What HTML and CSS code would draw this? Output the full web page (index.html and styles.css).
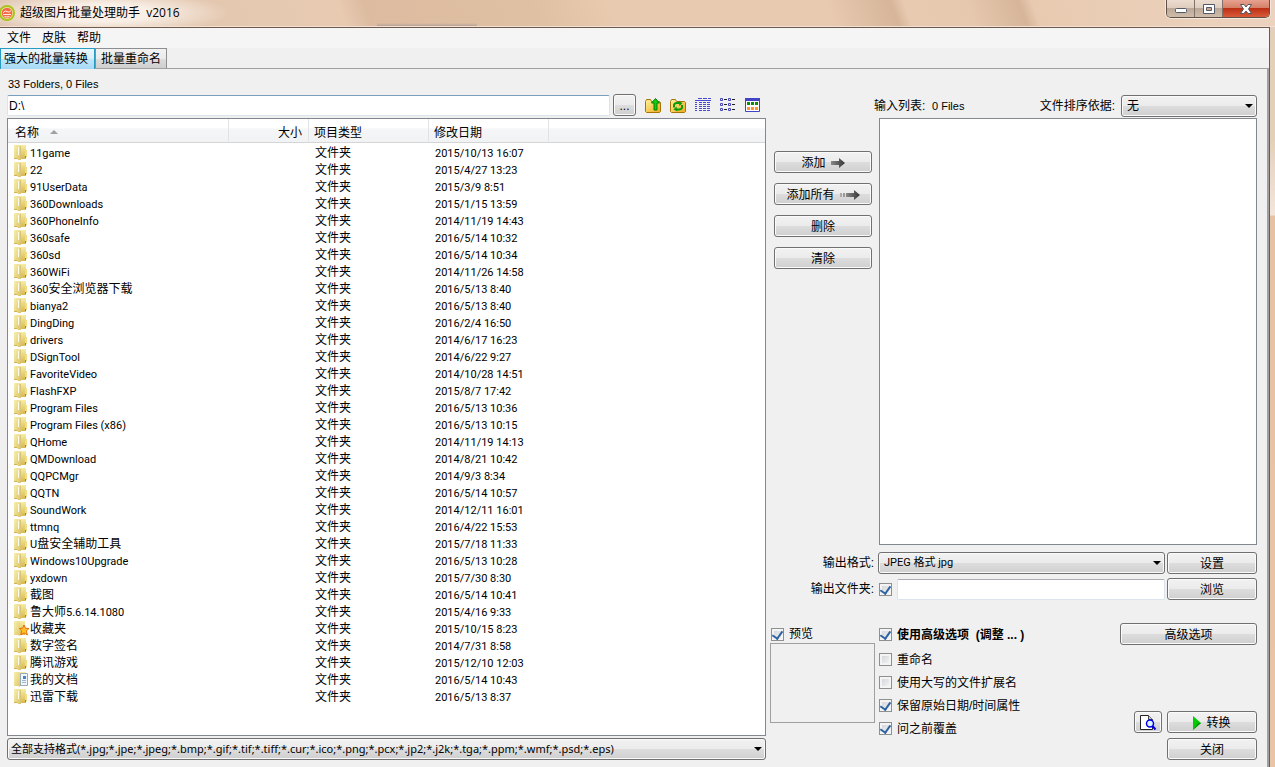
FILE: index.html
```html
<!DOCTYPE html>
<html lang="zh-CN">
<head>
    <meta charset="UTF-8">
    <meta name="viewport" content="width=device-width, initial-scale=1.0">
    <title>超级图片批量处理助手 v2016</title>
    <link rel="stylesheet" href="styles.css">
</head>
<body>
    <!-- Shared icons -->
    <svg class="sprites" width="0" height="0" aria-hidden="true">
        <defs>
            <linearGradient id="foldFront" x1="0" x2="1" y1="0" y2="1">
                <stop offset="0" stop-color="#f7efb0"/>
                <stop offset="1" stop-color="#e0c766"/>
            </linearGradient>
            <linearGradient id="foldBack" x1="0" x2="0" y1="0" y2="1">
                <stop offset="0" stop-color="#f6eda4"/>
                <stop offset="1" stop-color="#d9b94c"/>
            </linearGradient>
            <linearGradient id="gold" x1="0" x2="1" y1="0" y2="1">
                <stop offset="0" stop-color="#fff3a0"/>
                <stop offset="1" stop-color="#f0a818"/>
            </linearGradient>
            <linearGradient id="arrowGray" x1="0" x2="1" y1="0" y2="0">
                <stop offset="0" stop-color="#8a8a8a"/>
                <stop offset="1" stop-color="#333"/>
            </linearGradient>
        </defs>
        <symbol id="folder" viewBox="0 0 15 16">
            <path d="M5 0h7v14H5z" fill="url(#foldBack)"/>
            <path d="M0 0h4l2 1v14l-2 0-1-1H0z" fill="url(#foldFront)"/>
            <path d="M6 1h1v14H6z" fill="#d8c57a"/>
            <path d="M4 2h1v8H4z" fill="#fffde8"/>
            <path d="M0 13h3v1H0z" fill="#cfb356"/>
            <path d="M11 5h2v7l-2 1z" fill="#f0dd84"/>
            <path d="M11 11h1v2h-1z" fill="#3aa0a0"/>
        </symbol>
        <symbol id="folder-star" viewBox="0 0 15 16">
            <path d="M5 0h6v14H5z" fill="url(#foldBack)"/>
            <path d="M0 0h5l1 1v14l-2-1H0z" fill="url(#foldFront)"/>
            <path d="M10 4l1.400 3.200 3.600.3-2.700 2.300 1.100 4.200L10 11.800 6.800 14l.9-4.200L5.300 7.500l3.400-.3z" fill="#ffc31f" stroke="#ec6a18"/>
        </symbol>
        <symbol id="folder-doc" viewBox="0 0 15 16">
            <path d="M5 0h7v14H5z" fill="url(#foldBack)"/>
            <path d="M0 0h5l1 1v14l-2-1H0z" fill="url(#foldFront)"/>
            <path d="M6.500 1.500h7v12h-7z" fill="#eef5fb" stroke="#9aa7b4"/>
            <path d="M8 8.500h4M8 10.500h4" stroke="#9fb5cc"/>
            <path d="M9 4h3v3H9z" fill="#3f86cf"/>
        </symbol>
    </svg>

    <header class="titlebar">
        <svg class="logo" width="16" height="16" viewBox="0 0 16 16">
            <circle cx="7" cy="8" r="8" fill="#a9c41e"/>
            <circle cx="7" cy="8" r="6" fill="#f5e7a0"/>
            <circle cx="7" cy="8" r="5.300" fill="#f26a4b"/>
            <path d="M3 8q2-3.500 4-1.500T11 5.500M3 9.500h8M4.500 11.500q2.500 1 5 0" fill="none" stroke="#fff0dc"/>
        </svg>
        <h1>超级图片批量处理助手&nbsp; v2016</h1>
        <div class="window-controls">
            <button type="button" class="minimize" aria-label="最小化">
                <svg width="14" height="12" viewBox="0 0 14 12"><rect x="1.500" y="5.500" width="11" height="4" rx="1" fill="#fff" stroke="#535966"/></svg>
            </button>
            <button type="button" class="maximize" aria-label="最大化">
                <svg width="14" height="12" viewBox="0 0 14 12"><path d="M1.500 1.500h11v9h-11z" fill="#fff" stroke="#535966"/><path d="M4.500 4.500h5v3h-5z" fill="#c9ab94" stroke="#535966"/></svg>
            </button>
            <button type="button" class="close" aria-label="关闭窗口">
                <svg width="14" height="12" viewBox="0 0 14 12"><path d="M1.500 1.500h3.500l2 2.500 2-2.500h3.500L9.500 6l3 4.500H9L7 8l-2 2.500H1.500l3-4.500z" fill="#fff" stroke="#535966"/></svg>
            </button>
        </div>
    </header>

    <div class="client">
        <nav class="menubar">
            <button type="button">文件</button>
            <button type="button">皮肤</button>
            <button type="button">帮助</button>
        </nav>
        <div class="tabs" role="tablist">
            <button type="button" role="tab" class="active" aria-selected="true">强大的批量转换</button>
            <button type="button" role="tab" aria-selected="false">批量重命名</button>
        </div>

        <main>
            <!-- File browser -->
            <section class="browser">
                <p class="count arial">33 Folders, 0 Files</p>
                <div class="path-row">
                    <input type="text" class="path" value="D:\" aria-label="路径">
                    <button type="button" class="btn dots">...</button>
                    <div class="tools">
                        <button type="button" aria-label="向上">
                            <svg width="18" height="17" viewBox="0 0 18 17">
                                <path d="M1.500 4.500l1-2h4l1 2h8l1 1v9l-1 1h-13l-1-1z" fill="url(#gold)" stroke="#a87408"/>
                                <path d="M11.500 1.500l4 4.500H13v7h-3V6H7.500z" fill="#12cc12" stroke="#078007"/>
                            </svg>
                        </button>
                        <button type="button" aria-label="刷新">
                            <svg width="18" height="17" viewBox="0 0 18 17">
                                <path d="M1.500 4.500l1-2h4l1 2h8l1 1v9l-1 1h-13l-1-1z" fill="url(#gold)" stroke="#a87408"/>
                                <path d="M5 10.500V8q.5-2 3-2h2" fill="none" stroke="#0a9a0a" stroke-width="2"/>
                                <path d="M9.500 4l4 2-3 3z" fill="#0a9a0a"/>
                                <path d="M13 8v2.500q-.5 2-3 2H8" fill="none" stroke="#0a9a0a" stroke-width="2"/>
                                <path d="M8.500 14.500l-4-2 3-3z" fill="#0a9a0a"/>
                            </svg>
                        </button>
                        <button type="button" aria-label="详细信息">
                            <svg width="18" height="17" viewBox="0 0 18 17">
                                <path d="M4 1.500h13" stroke="#4a4ad0" stroke-dasharray="4 1"/>
                                <path d="M1 3.500h16" stroke="#4a4ad0"/>
                                <path d="M5 5.500h12M5 7.500h12M5 9.500h12M5 11.500h12M5 13.500h12" stroke="#4a4ad0" stroke-dasharray="3 1"/>
                                <path d="M1 5.500h2M1 7.500h2M1 9.500h2M1 11.500h2M1 13.500h2" stroke="#4a4ad0"/>
                            </svg>
                        </button>
                        <button type="button" aria-label="列表">
                            <svg width="18" height="17" viewBox="0 0 18 17">
                                <path d="M1.500 1.500h2v2h-2zM9.500 1.500h2v2h-2zM1.500 6.500h2v2h-2zM9.500 6.500h2v2h-2zM1.500 11.500h2v2h-2zM9.500 11.500h2v2h-2z" fill="none" stroke="#4343c5"/>
                                <path d="M5 2.500h3M13 2.500h3M5 7.500h3M13 7.500h3M5 12.500h3M13 12.500h3" stroke="#222"/>
                            </svg>
                        </button>
                        <button type="button" aria-label="缩略图">
                            <svg width="18" height="17" viewBox="0 0 18 17">
                                <path d="M1.500 1.500h14v13h-14z" fill="#fff" stroke="#4343c5"/>
                                <path d="M1 1h15v3H1z" fill="#4343c5"/>
                                <path d="M3 5h3v3H3zM7 5h3v3H7zM11 5h3v3h-3z" fill="#089008"/>
                                <path d="M3 10h3v3H3zM7 10h3v3H7zM11 10h3v3h-3z" fill="#ff9430"/>
                            </svg>
                        </button>
                    </div>
                </div>

                <div class="file-list">
                    <table>
                        <colgroup>
                            <col class="col-name">
                            <col class="col-size">
                            <col class="col-type">
                            <col class="col-date">
                            <col>
                        </colgroup>
                        <thead>
                            <tr><th>名称 <span class="sort-mark"></span></th><th class="size">大小</th><th>项目类型</th><th>修改日期</th><th></th></tr>
                        </thead>
                        <tbody>
                            <tr><td><svg><use href="#folder"/></svg><span>11game</span></td><td></td><td>文件夹</td><td><span>2015/10/13 16:07</span></td><td></td></tr>
                            <tr><td><svg><use href="#folder"/></svg><span>22</span></td><td></td><td>文件夹</td><td><span>2015/4/27 13:23</span></td><td></td></tr>
                            <tr><td><svg><use href="#folder"/></svg><span>91UserData</span></td><td></td><td>文件夹</td><td><span>2015/3/9 8:51</span></td><td></td></tr>
                            <tr><td><svg><use href="#folder"/></svg><span>360Downloads</span></td><td></td><td>文件夹</td><td><span>2015/1/15 13:59</span></td><td></td></tr>
                            <tr><td><svg><use href="#folder"/></svg><span>360PhoneInfo</span></td><td></td><td>文件夹</td><td><span>2014/11/19 14:43</span></td><td></td></tr>
                            <tr><td><svg><use href="#folder"/></svg><span>360safe</span></td><td></td><td>文件夹</td><td><span>2016/5/14 10:32</span></td><td></td></tr>
                            <tr><td><svg><use href="#folder"/></svg><span>360sd</span></td><td></td><td>文件夹</td><td><span>2016/5/14 10:34</span></td><td></td></tr>
                            <tr><td><svg><use href="#folder"/></svg><span>360WiFi</span></td><td></td><td>文件夹</td><td><span>2014/11/26 14:58</span></td><td></td></tr>
                            <tr><td><svg><use href="#folder"/></svg><span>360</span>安全浏览器下载</td><td></td><td>文件夹</td><td><span>2016/5/13 8:40</span></td><td></td></tr>
                            <tr><td><svg><use href="#folder"/></svg><span>bianya2</span></td><td></td><td>文件夹</td><td><span>2016/5/13 8:40</span></td><td></td></tr>
                            <tr><td><svg><use href="#folder"/></svg><span>DingDing</span></td><td></td><td>文件夹</td><td><span>2016/2/4 16:50</span></td><td></td></tr>
                            <tr><td><svg><use href="#folder"/></svg><span>drivers</span></td><td></td><td>文件夹</td><td><span>2014/6/17 16:23</span></td><td></td></tr>
                            <tr><td><svg><use href="#folder"/></svg><span>DSignTool</span></td><td></td><td>文件夹</td><td><span>2014/6/22 9:27</span></td><td></td></tr>
                            <tr><td><svg><use href="#folder"/></svg><span>FavoriteVideo</span></td><td></td><td>文件夹</td><td><span>2014/10/28 14:51</span></td><td></td></tr>
                            <tr><td><svg><use href="#folder"/></svg><span>FlashFXP</span></td><td></td><td>文件夹</td><td><span>2015/8/7 17:42</span></td><td></td></tr>
                            <tr><td><svg><use href="#folder"/></svg><span>Program Files</span></td><td></td><td>文件夹</td><td><span>2016/5/13 10:36</span></td><td></td></tr>
                            <tr><td><svg><use href="#folder"/></svg><span>Program Files (x86)</span></td><td></td><td>文件夹</td><td><span>2016/5/13 10:15</span></td><td></td></tr>
                            <tr><td><svg><use href="#folder"/></svg><span>QHome</span></td><td></td><td>文件夹</td><td><span>2014/11/19 14:13</span></td><td></td></tr>
                            <tr><td><svg><use href="#folder"/></svg><span>QMDownload</span></td><td></td><td>文件夹</td><td><span>2014/8/21 10:42</span></td><td></td></tr>
                            <tr><td><svg><use href="#folder"/></svg><span>QQPCMgr</span></td><td></td><td>文件夹</td><td><span>2014/9/3 8:34</span></td><td></td></tr>
                            <tr><td><svg><use href="#folder"/></svg><span>QQTN</span></td><td></td><td>文件夹</td><td><span>2016/5/14 10:57</span></td><td></td></tr>
                            <tr><td><svg><use href="#folder"/></svg><span>SoundWork</span></td><td></td><td>文件夹</td><td><span>2014/12/11 16:01</span></td><td></td></tr>
                            <tr><td><svg><use href="#folder"/></svg><span>ttmnq</span></td><td></td><td>文件夹</td><td><span>2016/4/22 15:53</span></td><td></td></tr>
                            <tr><td><svg><use href="#folder"/></svg><span>U</span>盘安全辅助工具</td><td></td><td>文件夹</td><td><span>2015/7/18 11:33</span></td><td></td></tr>
                            <tr><td><svg><use href="#folder"/></svg><span>Windows10Upgrade</span></td><td></td><td>文件夹</td><td><span>2016/5/13 10:28</span></td><td></td></tr>
                            <tr><td><svg><use href="#folder"/></svg><span>yxdown</span></td><td></td><td>文件夹</td><td><span>2015/7/30 8:30</span></td><td></td></tr>
                            <tr><td><svg><use href="#folder"/></svg>截图</td><td></td><td>文件夹</td><td><span>2016/5/14 10:41</span></td><td></td></tr>
                            <tr><td><svg><use href="#folder"/></svg>鲁大师<span>5.6.14.1080</span></td><td></td><td>文件夹</td><td><span>2015/4/16 9:33</span></td><td></td></tr>
                            <tr><td><svg><use href="#folder-star"/></svg>收藏夹</td><td></td><td>文件夹</td><td><span>2015/10/15 8:23</span></td><td></td></tr>
                            <tr><td><svg><use href="#folder"/></svg>数字签名</td><td></td><td>文件夹</td><td><span>2014/7/31 8:58</span></td><td></td></tr>
                            <tr><td><svg><use href="#folder"/></svg>腾讯游戏</td><td></td><td>文件夹</td><td><span>2015/12/10 12:03</span></td><td></td></tr>
                            <tr><td><svg><use href="#folder-doc"/></svg>我的文档</td><td></td><td>文件夹</td><td><span>2016/5/14 10:43</span></td><td></td></tr>
                            <tr><td><svg><use href="#folder"/></svg>迅雷下载</td><td></td><td>文件夹</td><td><span>2016/5/13 8:37</span></td><td></td></tr>
                        </tbody>
                    </table>
                </div>

                <div class="select filter">
                    <select aria-label="文件类型">
                        <option>全部支持格式(*.jpg;*.jpe;*.jpeg;*.bmp;*.gif;*.tif;*.tiff;*.cur;*.ico;*.png;*.pcx;*.jp2;*.j2k;*.tga;*.ppm;*.wmf;*.psd;*.eps)</option>
                    </select>
                </div>
            </section>

            <!-- Conversion queue and options -->
            <section class="convert">
                <div class="queue-head">
                    <span>输入列表:&nbsp; <span class="arial">0 Files</span></span>
                    <label for="sort">文件排序依据:</label>
                    <div class="select sort">
                        <select id="sort"><option>无</option></select>
                    </div>
                </div>

                <div class="queue">
                    <div class="queue-buttons">
                        <button type="button" class="btn">添加
                            <svg width="14" height="12" viewBox="0 0 14 12"><path d="M0 4h8V1l6 5-6 5V8H0z" fill="url(#arrowGray)"/></svg>
                        </button>
                        <button type="button" class="btn">添加所有
                            <svg width="20" height="12" viewBox="0 0 20 12"><path d="M0 4h2v4H0z" fill="#aaa"/><path d="M3 4h2v4H3z" fill="#999"/><path d="M6 4h8V1l6 5-6 5V8H6z" fill="url(#arrowGray)"/></svg>
                        </button>
                        <button type="button" class="btn">删除</button>
                        <button type="button" class="btn">清除</button>
                    </div>
                    <div class="queue-list"></div>
                </div>

                <div class="output">
                    <label for="format">输出格式:</label>
                    <div class="select format">
                        <select id="format"><option>JPEG 格式 jpg</option></select>
                    </div>
                    <button type="button" class="btn">设置</button>

                    <label for="folder-path">输出文件夹:</label>
                    <div class="folder-field">
                        <input type="checkbox" aria-label="使用输出文件夹" checked>
                        <input type="text" id="folder-path">
                    </div>
                    <button type="button" class="btn">浏览</button>
                </div>

                <div class="bottom">
                    <div class="preview">
                        <label class="check"><input type="checkbox" checked>预览</label>
                        <div class="preview-box"></div>
                    </div>
                    <div class="options">
                        <label class="check main-option"><input type="checkbox" checked>使用高级选项&nbsp; (调整 ... )</label>
                        <label class="check"><input type="checkbox">重命名</label>
                        <label class="check"><input type="checkbox">使用大写的文件扩展名</label>
                        <label class="check"><input type="checkbox" checked>保留原始日期/时间属性</label>
                        <label class="check"><input type="checkbox" checked>问之前覆盖</label>
                    </div>
                    <div class="actions">
                        <button type="button" class="btn advanced">高级选项</button>
                        <div class="run-row">
                            <button type="button" class="btn view" aria-label="预览文件">
                                <svg width="18" height="17" viewBox="0 0 18 17">
                                    <path d="M1.500 1.500h8l4 4v10h-12z" fill="#fff" stroke="#222"/>
                                    <path d="M9.500 1.500v4h4" fill="#ccc" stroke="#444"/>
                                    <circle cx="11" cy="9.500" r="3.500" fill="#dff6ff" stroke="#0000f0" stroke-width="1.500"/>
                                    <path d="M13.500 12l3 3.500" stroke="#0000f0" stroke-width="2"/>
                                </svg>
                            </button>
                            <button type="button" class="btn">
                                <svg width="8" height="14" viewBox="0 0 8 14"><path d="M0 0l8 7-8 7z" fill="#0c0"/><path d="M0 14l8-7H5z" fill="#089008"/></svg>
                                转换
                            </button>
                        </div>
                        <button type="button" class="btn">关闭</button>
                    </div>
                </div>
            </section>
        </main>
    </div>
</body>
</html>
```
FILE: styles.css
```css
* {
    box-sizing: border-box;
}
body {
    margin: 0;
    min-height: 100vh;
    display: flex;
    flex-direction: column;
    background: linear-gradient(#e6cfba 0, #e6cfba 140px, #f3e6da 215px, #e6c2a4 216px, #e8c5a6 100%);
    color: #000;
    font-family: "Liberation Sans", "Noto Sans CJK SC", sans-serif;
    font-size: 12px;
    line-height: 16px;
}
button, input, select {
    font: inherit;
    color: inherit;
    margin: 0;
}
.sprites {
    position: absolute;
}
.arial {
    font-size: 11px;
}

/* Title bar */
.titlebar {
    display: flex;
    align-items: flex-start;
    height: 27px;
    padding-right: 5px;
    border-bottom: 1px solid #f3e2d3;
    background:
        radial-gradient(ellipse 130px 22px at 100px 13px, rgba(255, 250, 245, 0.8) 40%, transparent),
        linear-gradient(rgba(130, 130, 150, 0) 0, #a99a98 100%) 377px 23px / 100px 4px no-repeat,
        linear-gradient(70deg, #ddc2ac 0, #e6c9b1 22%, #e8cab1 27%, #dcbba0 29%, #e0c0a2 42%, #e8cab0 48%, #e8cab0 65%, #d6b59a 70%, #e8cab0 71%, #e6c8ae 76%, #d6b59a 80%, #e8cab0 81%, #ecd3bf 100%);
}
.logo {
    margin-top: 5px;
}
h1 {
    flex: 1;
    margin: 5px 0 0 4px;
    font-family: "Open Sans", "Noto Sans CJK SC", sans-serif;
    font-size: 12px;
    font-weight: normal;
}
.window-controls {
    display: flex;
    height: 18px;
    border: 1px solid #5f5048;
    border-top: none;
    border-radius: 0 0 5px 5px;
    box-shadow: 0 0 0 1px #f5e8dd;
    overflow: hidden;
}
.window-controls button {
    display: flex;
    justify-content: center;
    align-items: center;
    width: 28px;
    padding: 0;
    border: none;
    border-right: 1px solid #82706a;
    background: linear-gradient(#ecdccf 0, #dfcdbf 45%, #bba898 50%, #d0bcaa 100%);
}
.window-controls .close {
    width: 46px;
    border-right: none;
    background: linear-gradient(#e7a291 0, #d68069 45%, #bc3015 50%, #d95b38 100%);
}

/* Client area */
.client {
    flex: 1;
    display: flex;
    flex-direction: column;
    margin-right: 5px;
    border-top: 1px solid #6e5a4c;
    border-right: 1px solid #6e5a4c;
    background: #f0f0f0;
}
.menubar {
    display: flex;
    gap: 11px;
    height: 20px;
    padding: 2px 7px;
    background: #f5f5f5;
}
.menubar button {
    padding: 0;
    border: none;
    background: none;
}
.tabs {
    display: flex;
    height: 21px;
    border-bottom: 1px solid #a0a0a0;
}
.tabs button {
    height: 20px;
    padding: 0 5px;
    border: 1px solid #8d8e8f;
    border-bottom: none;
    background: linear-gradient(#f2f2f2 0, #ebebeb 50%, #dcdcdc 51%, #cfcfcf 100%);
}
.tabs .active {
    height: 21px;
    padding: 0 6px 0 3px;
    border-color: #2a9bc0;
    background: linear-gradient(#eaf6fd 0, #d9f0fc 50%, #bee6fd 51%, #a7d9f5 100%);
}
main {
    flex: 1;
    display: flex;
    gap: 4px;
    padding: 0 10px 7px 7px;
    border-right: 2px solid #a0a0a0;
}
.browser {
    flex: 759;
    min-width: 0;
    display: flex;
    flex-direction: column;
}
.convert {
    flex: 487;
    min-width: 0;
    display: flex;
    flex-direction: column;
}

/* Controls */
.btn {
    display: flex;
    justify-content: center;
    align-items: center;
    gap: 5px;
    height: 22px;
    padding: 1px 0 0;
    border: 1px solid #707070;
    border-radius: 3px;
    background: linear-gradient(#f2f2f2 0, #ebebeb 50%, #dddddd 51%, #cfcfcf 100%);
    box-shadow: inset 0 0 0 1px #fafafa;
}
.select {
    position: relative;
}
.select select {
    appearance: none;
    display: block;
    width: 100%;
    height: 22px;
    padding: 0 20px 0 5px;
    border: 1px solid #707070;
    border-radius: 3px;
    background: linear-gradient(#f2f2f2 0, #ebebeb 50%, #dddddd 51%, #cfcfcf 100%);
    box-shadow: inset 0 0 0 1px #fafafa;
}
.select::after {
    content: "";
    position: absolute;
    right: 4px;
    top: 9px;
    border: 4px solid transparent;
    border-top-color: #000;
    border-bottom: none;
    pointer-events: none;
}
input[type="text"] {
    min-width: 0;
    height: 21px;
    padding: 0 1px;
    border: 1px solid #dbe3ef;
    border-top-color: #abadb3;
    border-radius: 2px;
    background: #fff;
}
input[type="checkbox"] {
    appearance: none;
    flex: none;
    display: grid;
    place-items: center;
    width: 13px;
    height: 13px;
    border: 1px solid #8e8f8f;
    background: linear-gradient(135deg, #cdd1d6, #f8f8f8);
    box-shadow: inset 0 0 0 2px #f4f4f4;
}
input[type="checkbox"]:checked::before {
    content: "";
    width: 5px;
    height: 8px;
    margin-bottom: 3px;
    border: solid #2f639f;
    border-width: 0 2px 2px 0;
    transform: rotate(35deg);
}

/* File browser */
.count {
    margin: 7px 0 2px 1px;
}
.path-row {
    display: flex;
    align-items: flex-end;
    gap: 3px;
    height: 22px;
    margin-bottom: 2px;
}
.path-row .path {
    flex: 1;
    border-top-color: #7a9ebb;
}
.dots {
    width: 23px;
}
.tools {
    display: flex;
    align-items: center;
    gap: 7px;
    width: 127px;
    height: 22px;
    padding-left: 5px;
}
.tools button {
    display: flex;
    padding: 0;
    border: none;
    background: none;
}
.file-list {
    flex: 1;
    margin-bottom: 2px;
    border: 1px solid #828790;
    background: #fff;
}
table {
    width: 100%;
    table-layout: fixed;
    border-collapse: separate;
    border-spacing: 0;
}
.col-name {
    width: 221px;
}
.col-size {
    width: 80px;
}
.col-type, .col-date {
    width: 120px;
}
th {
    height: 24px;
    padding: 4px 6px 0 5px;
    border-right: 1px solid #e2e3e5;
    border-bottom: 1px solid #d5d5d5;
    background: linear-gradient(#fff 0, #fff 40%, #f5f6f7 42%, #f1f2f4 100%);
    font-weight: normal;
    text-align: left;
}
th:first-child {
    padding-left: 7px;
}
th:last-child {
    border-right: none;
}
th.size {
    text-align: right;
}
.sort-mark {
    display: inline-block;
    margin-left: 8px;
    border: 4px solid transparent;
    border-top: none;
    border-bottom-color: #a0a0a0;
    vertical-align: 3px;
}
td {
    height: 17px;
    padding: 0 6px;
    line-height: 17px;
    white-space: nowrap;
}
tbody::before {
    content: "";
    display: block;
    height: 2px;
}
td svg {
    width: 15px;
    height: 16px;
    margin-right: 1px;
    vertical-align: top;
}
td span {
    font-family: Roboto, sans-serif;
    font-size: 11px;
    line-height: 11px;
}
.filter select {
    padding-left: 3px;
    font-family: "Noto Sans", "Noto Sans CJK SC", sans-serif;
    font-size: 11px;
}

/* Conversion queue */
.queue-head {
    display: flex;
    align-items: center;
    height: 23px;
    margin: 25px 0 1px 104px;
}
.queue-head label {
    margin-left: auto;
}
.sort {
    width: 136px;
    margin-left: 6px;
}
.queue {
    flex: 1;
    display: grid;
    grid-template-columns: 104px 1fr;
    gap: 5px;
}
.queue-buttons {
    display: flex;
    flex-direction: column;
    gap: 10px;
    padding: 33px 2px 0 4px;
}
.queue-list {
    border: 1px solid #828790;
    background: #fff;
}
.output {
    display: grid;
    grid-template-columns: 104px 1fr 90px;
    gap: 4px 2px;
    align-items: center;
    margin: 7px 0 23px;
}
.output label {
    text-align: right;
}
.format, .folder-field {
    margin-left: 2px;
}
.format select {
    font-family: Roboto, "Noto Sans CJK SC", sans-serif;
    font-size: 11px;
}
.folder-field {
    display: flex;
    align-items: center;
    gap: 5px;
    padding-left: 1px;
}
.folder-field input[type="text"] {
    flex: 1;
}

/* Options */
.bottom {
    display: grid;
    grid-template-columns: 105px 1fr 137px;
    gap: 4px;
}
.check {
    display: flex;
    align-items: center;
    gap: 5px;
    height: 23px;
}
.preview .check {
    height: 20px;
    padding: 2px 0 0 1px;
}
.preview-box {
    height: 80px;
    border: 1px solid #a0a0a0;
}
.main-option {
    margin-bottom: 2px;
    font-weight: bold;
}
.actions {
    display: flex;
    flex-direction: column;
    gap: 5px;
}
.run-row {
    display: grid;
    grid-template-columns: 28px 90px;
    gap: 5px;
    justify-content: end;
    margin-top: auto;
}
.actions > .btn:last-child {
    width: 90px;
    margin-left: auto;
}
.actions .advanced {
    margin-bottom: 61px;
}
```
